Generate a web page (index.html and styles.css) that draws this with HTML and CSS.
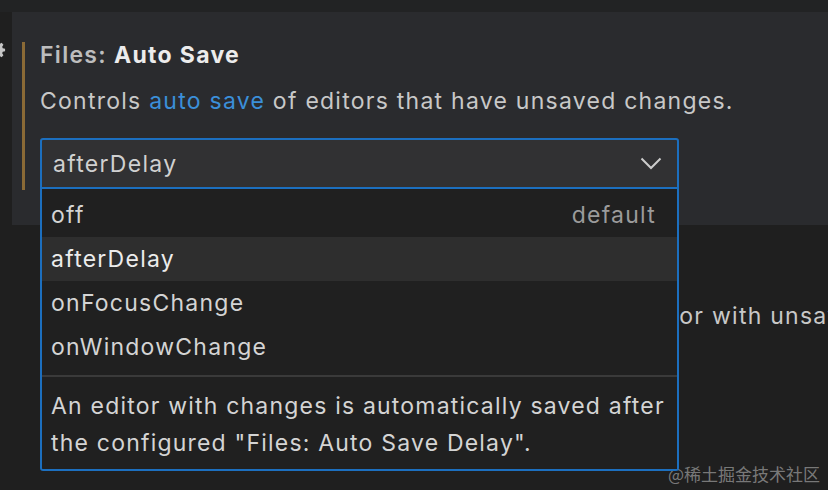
FILE: index.html
```html
<!DOCTYPE html>
<html>
<head>
<meta charset="utf-8">
<link rel="stylesheet" href="styles.css">
</head>
<body>
<div class="top"></div>
<div class="main">
  <div class="gutter">
    <svg class="gear" width="22" height="22" viewBox="0 0 16 16"><path fill="#c5c5c5" fill-rule="evenodd" d="M9.1 1.5l.4 1.7 1 .5 1.6-.9 1.3 1.3-.9 1.6.4 1 1.7.4v1.8l-1.7.4-.4 1 .9 1.6-1.3 1.3-1.6-.9-1 .4-.4 1.7H7.3l-.4-1.7-1-.4-1.6.9L3 12.1l.9-1.6-.4-1-1.7-.4V7.3l1.7-.4.4-1L3 4.3 4.3 3l1.6.9 1-.5.4-1.7zM8.2 5.7a2.5 2.5 0 1 0 0 5 2.5 2.5 0 0 0 0-5z"/></svg>
  </div>
  <div class="content">
    <div class="card">
      <div class="bar"></div>
      <div class="setting">
        <div class="title"><span class="cat">Files: </span><span class="name">Auto Save</span></div>
        <div class="desc">Controls <span class="link">auto save</span> of editors that have unsaved changes.</div>
        <div class="select-wrap">
          <div class="select">
            <span>afterDelay</span>
            <svg class="chev" width="22" height="13" viewBox="0 0 22 13"><path d="M1.5 1.5 11 11 20.5 1.5" fill="none" stroke="#cccccc" stroke-width="2"/></svg>
          </div>
          <div class="dropdown">
            <div class="options">
              <div class="opt"><span>off</span><span class="def">default</span></div>
              <div class="opt active"><span>afterDelay</span></div>
              <div class="opt"><span>onFocusChange</span></div>
              <div class="opt"><span>onWindowChange</span></div>
            </div>
            <div class="sep"></div>
            <div class="help">An editor with changes is automatically saved after<br>the configured "Files: Auto Save Delay".</div>
          </div>
        </div>
      </div>
    </div>
    <div class="next">
      <div class="title"><span class="cat">Files: </span><span class="name">Auto Save Delay</span></div>
      <div class="desc">Controls the delay in milliseconds after which an editor with unsaved changes is saved automatically.</div>
    </div>
  </div>
</div>
<div class="watermark">@稀土掘金技术社区</div>
</body>
</html>
```
FILE: styles.css
```css
html, body {
  margin: 0;
  padding: 0;
}
body {
  width: 828px;
  height: 490px;
  overflow: hidden;
  background: #1f1f1f;
  font-family: Inter, "Noto Sans", "Noto Sans CJK SC", sans-serif;
  color: #cccccc;
  position: relative;
}
.top {
  height: 12px;
  background: #222324;
}
.main {
  display: flex;
}
.gutter {
  width: 12px;
  flex: none;
  overflow: hidden;
  padding-top: 27px;
}
.gear {
  display: block;
  margin-left: -15px;
}
.content {
  flex: 1;
  min-width: 0;
}
.card {
  background: #2a2b2e;
  height: 213px;
  display: flex;
  padding: 28px 0 0 10px;
  box-sizing: border-box;
}
.bar {
  width: 3px;
  height: 148px;
  margin-top: 2px;
  background: #8a6a36;
  margin-right: 15px;
  flex: none;
}
.setting {
  width: 639px;
  flex: none;
}
.title {
  font-size: 23px;
  line-height: 30px;
  letter-spacing: 1.3px;
  white-space: nowrap;
}
.cat {
  font-weight: 600;
  color: #bdbdbd;
}
.name {
  font-weight: 700;
  color: #ececec;
}
.desc {
  font-size: 23px;
  line-height: 30px;
  letter-spacing: 1.25px;
  margin-top: 16px;
  color: #c8c8c8;
  white-space: nowrap;
}
.link {
  color: #3b8fd9;
}
.select-wrap {
  position: relative;
  margin-top: 22px;
}
.select {
  height: 51px;
  box-sizing: border-box;
  border: 2px solid #1c6fbf;
  border-radius: 3px 3px 0 0;
  background: #313133;
  display: flex;
  align-items: center;
  justify-content: space-between;
  padding: 0 15px 0 11px;
  font-size: 23px;
  letter-spacing: 1.3px;
  color: #d0d0d0;
}
.dropdown {
  position: absolute;
  top: 100%;
  left: 0;
  right: 0;
  z-index: 2;
  background: #202020;
  border: 2px solid #1c6fbf;
  border-top: none;
  border-radius: 0 0 3px 3px;
  height: 282px;
  box-sizing: border-box;
}
.options {
  padding-top: 4px;
}
.opt {
  height: 44px;
  display: flex;
  align-items: center;
  justify-content: space-between;
  padding: 0 21px 0 9px;
  font-size: 23px;
  letter-spacing: 1.25px;
  color: #d4d4d4;
}
.opt.active {
  background: #2e2e2e;
  color: #ececec;
}
.def {
  color: #9b9b9b;
}
.sep {
  height: 2px;
  background: #3a3a3a;
  margin-top: 6px;
}
.help {
  padding: 11px 9px 0 9px;
  font-size: 23px;
  line-height: 36.5px;
  letter-spacing: 1.2px;
  color: #d4d4d4;
  white-space: nowrap;
}
.next {
  padding: 30px 0 0 28px;
  overflow: hidden;
}
.watermark {
  position: absolute;
  right: 8px;
  bottom: 4px;
  font-size: 17px;
  color: rgba(200, 200, 200, 0.55);
  font-family: "Noto Sans CJK SC", sans-serif;
}
```
